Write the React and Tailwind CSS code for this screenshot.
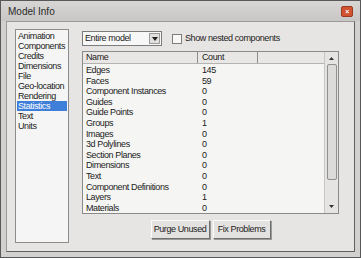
import React from 'react';

const sections = [
  'Animation', 'Components', 'Credits', 'Dimensions', 'File', 'Geo-location',
  'Rendering', 'Statistics', 'Text', 'Units',
];

const stats = [
  ['Edges', '145'],
  ['Faces', '59'],
  ['Component Instances', '0'],
  ['Guides', '0'],
  ['Guide Points', '0'],
  ['Groups', '1'],
  ['Images', '0'],
  ['3d Polylines', '0'],
  ['Section Planes', '0'],
  ['Dimensions', '0'],
  ['Text', '0'],
  ['Component Definitions', '0'],
  ['Layers', '1'],
  ['Materials', '0'],
];

const Button = ({ children, width }) => (
  <button
    className={`${width} h-[19px] bg-[#e4e2e0] border border-t-[#fbfbfb] border-l-[#fbfbfb] border-r-[#6f6f6f] border-b-[#6f6f6f] shadow-[1px_1px_0_#9a9a9a] text-[9px] text-[#1b1b1b] leading-none whitespace-nowrap`}
  >
    {children}
  </button>
);

const App = () => {
  return (
    <div className="w-[361px] h-[258px] bg-[#d3d1cf] border border-[#585858] flex flex-col [font-family:'Liberation_Sans',Arial,sans-serif] tracking-[-0.4px] whitespace-nowrap text-[#1b1b1b] overflow-hidden">
      {/* Title bar */}
      <div className="h-[20px] flex items-center justify-between pl-[7px] pr-[7px] bg-gradient-to-b from-[#d8d6d4] to-[#c9c7c5]">
        <span className="text-[10px] tracking-normal text-[#2a2a2a]">Model Info</span>
        <div className="w-[12px] h-[11px] rounded-[2px] bg-[#d0522e] border border-[#9a3a22] flex items-center justify-center">
          <span className="text-[7px] leading-none text-white font-bold">×</span>
        </div>
      </div>

      {/* Body */}
      <div className="flex-1 mx-[5px] mb-[5px] bg-[#e7e5e3] border border-t-[#9d9b99] border-l-[#9d9b99] border-r-[#5f5f5f] border-b-[#5f5f5f] flex pl-[8px] pt-[7px] pb-[6px] pr-[15px] gap-[13px]">
        {/* Section list */}
        <div className="w-[54px] h-[214px] bg-[#f5f5f5] border border-[#8c8c8c] pt-[1px] px-[1px] text-[9px] leading-[10px]">
          {sections.map((s) => (
            <div
              key={s}
              className={`pl-[1px] ${s === 'Statistics' ? 'bg-[#3f7fd9] text-white' : ''}`}
            >
              {s}
            </div>
          ))}
        </div>

        {/* Right panel */}
        <div className="flex-1 flex flex-col">
          <div className="flex items-center h-[15px] mt-[2px]">
            <div className="w-[80px] h-[15px] bg-[#f7f7f7] border border-[#7b7b7b] flex items-center justify-between pl-[2px] pr-[1px]">
              <span className="text-[9px]">Entire model</span>
              <div className="w-[11px] h-[11px] bg-[#e2e0de] border border-[#9a9a9a] flex items-center justify-center">
                <svg width="6" height="4" viewBox="0 0 6 4">
                  <path d="M0 0 L6 0 L3 4 Z" fill="#222" />
                </svg>
              </div>
            </div>
            <div className="ml-[10px] w-[10px] h-[10px] bg-[#f7f7f7] border border-[#7d7d7d]" />
            <span className="ml-[3px] text-[9px]">Show nested components</span>
          </div>

          {/* Table */}
          <div className="mt-[5px] h-[163px] bg-[#f5f5f3] border border-[#8a8a8a] flex">
            <div className="flex-1 flex flex-col">
              <div className="h-[12px] flex bg-[#e9e7e5] border-b border-[#b5b3b1] text-[9px] leading-[11px]">
                <div className="w-[115px] pl-[3px] border-r border-[#8d8d8d]">Name</div>
                <div className="w-[60px] pl-[4px] border-r border-[#8d8d8d]">Count</div>
                <div className="flex-1" />
              </div>
              <div className="text-[9px] leading-[10.6px] pt-[1px]">
                {stats.map(([name, count]) => (
                  <div key={name} className="flex">
                    <div className="w-[115px] pl-[3px]">{name}</div>
                    <div className="pl-[4px]">{count}</div>
                  </div>
                ))}
              </div>
            </div>
            {/* Scrollbar */}
            <div className="w-[14px] bg-[#e6e4e2] border-l border-[#c8c6c4] flex flex-col items-center">
              <div className="h-[12px] flex items-center justify-center">
                <svg width="5" height="3" viewBox="0 0 5 3">
                  <path d="M0 3 L5 3 L2.5 0 Z" fill="#333" />
                </svg>
              </div>
              <div className="w-[10px] h-[116px] rounded-[2px] bg-[#dddbd9] border border-[#8f8f8f]" />
              <div className="flex-1" />
              <div className="h-[14px] flex items-center justify-center">
                <svg width="5" height="3" viewBox="0 0 5 3">
                  <path d="M0 0 L5 0 L2.5 3 Z" fill="#333" />
                </svg>
              </div>
            </div>
          </div>

          <div className="flex justify-center gap-[3px] mt-[6px]">
            <Button width="w-[59px]">Purge Unused</Button>
            <Button width="w-[58px]">Fix Problems</Button>
          </div>
        </div>
      </div>
    </div>
  );
};

export default App;
